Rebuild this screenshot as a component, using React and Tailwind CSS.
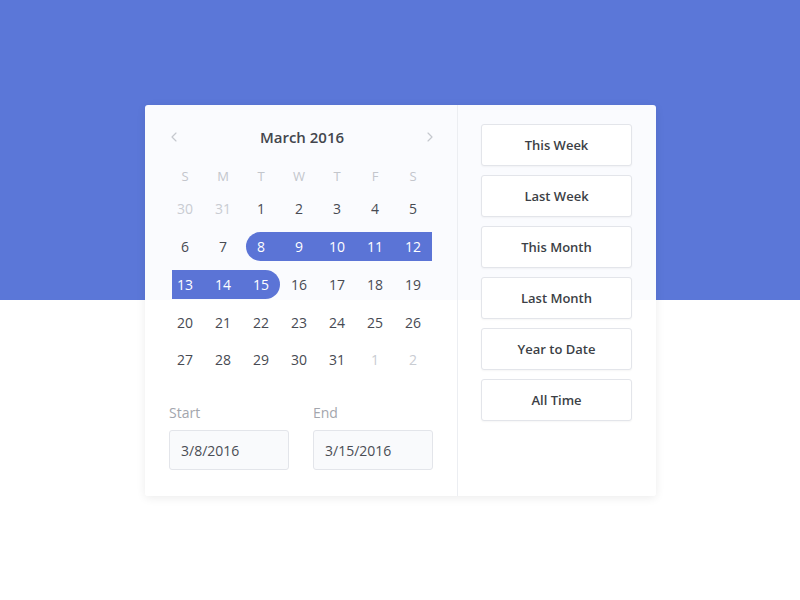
import { ChevronLeft, ChevronRight } from 'lucide-react';

const WEEKDAYS = ['S', 'M', 'T', 'W', 'T', 'F', 'S'];

// March 2016 laid out Sunday-first, with the trailing days of Feb / leading days of April
const WEEKS = [
    [{ d: 30, out: true }, { d: 31, out: true }, { d: 1 }, { d: 2 }, { d: 3 }, { d: 4 }, { d: 5 }],
    [{ d: 6 }, { d: 7 }, { d: 8 }, { d: 9 }, { d: 10 }, { d: 11 }, { d: 12 }],
    [{ d: 13 }, { d: 14 }, { d: 15 }, { d: 16 }, { d: 17 }, { d: 18 }, { d: 19 }],
    [{ d: 20 }, { d: 21 }, { d: 22 }, { d: 23 }, { d: 24 }, { d: 25 }, { d: 26 }],
    [{ d: 27 }, { d: 28 }, { d: 29 }, { d: 30 }, { d: 31 }, { d: 1, out: true }, { d: 2, out: true }],
];

const RANGE_START = 8;
const RANGE_END = 15;

const PRESETS = ['This Week', 'Last Week', 'This Month', 'Last Month', 'Year to Date', 'All Time'];

const DayCell = ({ day, col }) => {
    const selected = !day.out && day.d >= RANGE_START && day.d <= RANGE_END;
    const isStart = selected && day.d === RANGE_START;
    const isEnd = selected && day.d === RANGE_END;

    let bar = '';
    if (selected) {
        bar = 'bg-[#5b74d6] text-white';
        if (isStart) bar += ' rounded-l-full ml-[4px]';
        else if (col === 0) bar += ' ml-[6px]';
        if (isEnd) bar += ' rounded-r-full';
    }

    return (
        <div className="h-[37.75px] flex items-center">
            <div className={`h-[29px] w-full flex items-center justify-center text-[14px] ${bar} ${!selected && day.out ? 'text-[#c9ccd2]' : ''} ${!selected && !day.out ? 'text-[#474a52]' : ''}`}>
                <span className={isStart ? '-ml-[4px]' : col === 0 && selected ? '-ml-[6px]' : ''}>{day.d}</span>
            </div>
        </div>
    );
};

const App = () => {
    return (
        <div
            className="w-[800px] h-[600px] overflow-hidden pt-[105px] pl-[145px] bg-[linear-gradient(to_bottom,#5b77d8_300px,#ffffff_300px)]"
            style={{ fontFamily: '"Open Sans", "Liberation Sans", sans-serif' }}
        >
            <div className="w-[511px] h-[391px] flex bg-white/[0.97] rounded-[3px] shadow-[0_2px_10px_rgba(0,0,0,0.08)]">
                {/* calendar side */}
                <div className="w-[313px] border-r border-[#eceef2] pl-[21px] pt-[20px]">
                    <div className="w-[266px] h-[24px] flex items-center justify-between">
                        <ChevronLeft size={16} strokeWidth={1.75} className="text-[#c5c8ce]" />
                        <span className="text-[15px] font-semibold text-[#43464d]">March 2016</span>
                        <ChevronRight size={16} strokeWidth={1.75} className="text-[#c5c8ce] mr-[-6px]" />
                    </div>

                    <div className="w-[266px] grid grid-cols-7 mt-[18px] h-[20px] items-center">
                        {WEEKDAYS.map((w, i) => (
                            <span key={i} className="text-center text-[13px] text-[#c3c6cc]">{w}</span>
                        ))}
                    </div>

                    <div className="w-[266px] mt-[3px]">
                        {WEEKS.map((week, r) => (
                            <div key={r} className="grid grid-cols-7">
                                {week.map((day, c) => (
                                    <DayCell key={c} day={day} col={c} />
                                ))}
                            </div>
                        ))}
                    </div>

                    <div className="flex gap-[24px] mt-[24px] pl-[3px]">
                        <div className="w-[120px]">
                            <div className="text-[14px] text-[#a3a6ad] leading-[20px]">Start</div>
                            <div className="mt-[7px] h-[40px] border border-[#e3e5ea] rounded-[3px] bg-[#f9fafc] flex items-center px-[11px] pt-[1px] text-[14px] text-[#4a4d54]">
                                3/8/2016
                            </div>
                        </div>
                        <div className="w-[120px]">
                            <div className="text-[14px] text-[#a3a6ad] leading-[20px]">End</div>
                            <div className="mt-[7px] h-[40px] border border-[#e3e5ea] rounded-[3px] bg-[#f9fafc] flex items-center px-[11px] pt-[1px] text-[14px] text-[#4a4d54]">
                                3/15/2016
                            </div>
                        </div>
                    </div>
                </div>

                {/* quick range presets */}
                <div className="flex-1 pt-[19px] pl-[23px] flex flex-col gap-[9px]">
                    {PRESETS.map((p) => (
                        <button
                            key={p}
                            className="w-[151px] h-[42px] pt-[2px] bg-white border border-[#e3e5ea] rounded-[3px] shadow-[0_1px_2px_rgba(0,0,0,0.04)] text-[13px] font-semibold text-[#3c3f46]"
                        >
                            {p}
                        </button>
                    ))}
                </div>
            </div>
        </div>
    );
};

export default App;
